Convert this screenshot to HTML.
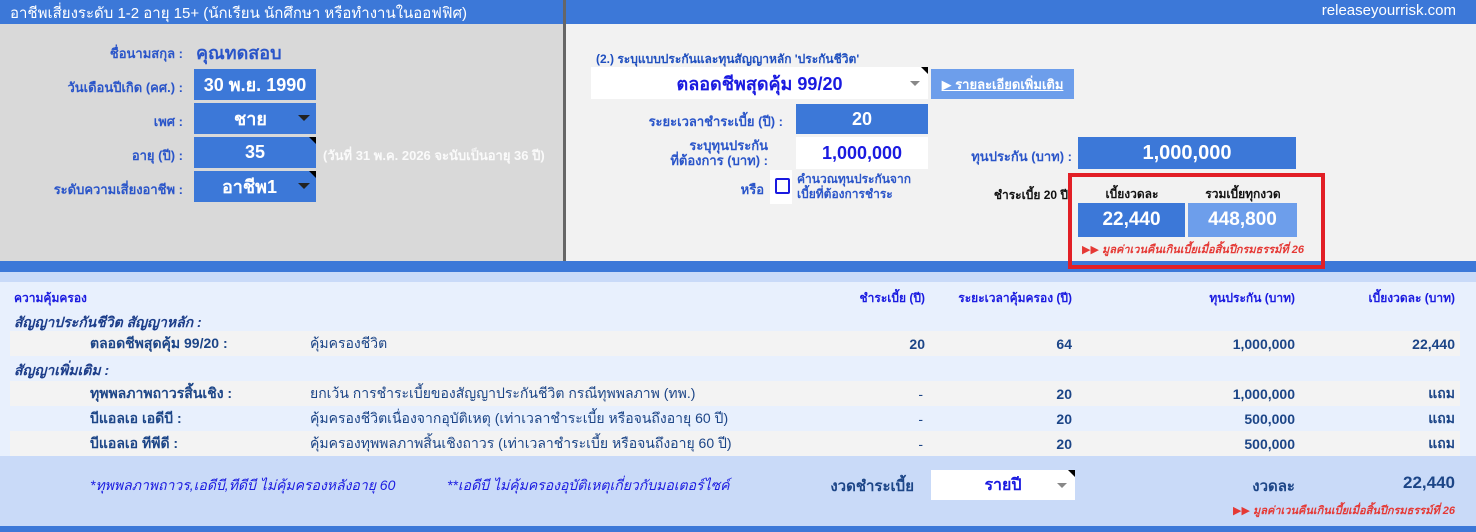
<!DOCTYPE html>
<html><head><meta charset="utf-8"><style>
*{margin:0;padding:0;box-sizing:border-box}
body{width:1476px;height:532px;position:relative;overflow:hidden;font-family:"Liberation Sans","DejaVu Sans",sans-serif;background:#e8f0fd}
.a{position:absolute;white-space:nowrap}
.lbl{color:#2a55c9;font-size:13px;font-weight:bold;text-align:right}
.box{position:absolute;background:#3c78d8;color:#fff;font-weight:bold;font-size:18px;display:flex;align-items:center;justify-content:center}
.wbox{position:absolute;background:#fff;font-weight:bold;display:flex;align-items:center;justify-content:center}
.tri{position:absolute;right:0;top:0;width:0;height:0;border-top:7px solid #000;border-left:7px solid transparent}
.dd{position:absolute;width:0;height:0;border-left:6px solid transparent;border-right:6px solid transparent;border-top:6px solid #222}
.row{position:absolute;left:10px;width:1450px;height:25px;background:#f3f3f3}
.t{position:absolute;font-size:14px;color:#1c4587;white-space:nowrap;top:50%;transform:translateY(-50%)}
.b{font-weight:bold}
</style></head><body>
<div class="a" style="left:0;top:0;width:1476px;height:24px;background:#3c78d8"></div>
<div class="a" style="left:10px;top:1px;color:#fff;font-size:15px">อาชีพเสี่ยงระดับ 1-2 อายุ 15+ (นักเรียน นักศึกษา หรือทำงานในออฟฟิศ)</div>
<div class="a" style="right:20px;top:2px;color:#fff;font-size:15px">releaseyourrisk.com</div>
<div class="a" style="left:0;top:24px;width:563px;height:237px;background:#d9d9d9"></div>
<div class="a" style="left:563px;top:0;width:3px;height:261px;background:#666"></div>
<div class="a" style="left:566px;top:24px;width:910px;height:237px;background:#f2f2f2"></div>

<div class="a lbl" style="right:1293px;top:43px">ชื่อนามสกุล :</div>
<div class="a" style="left:196px;top:38px;font-size:18px;font-weight:bold;color:#2a55c9">คุณทดสอบ</div>
<div class="a lbl" style="right:1293px;top:77px">วันเดือนปีเกิด (คศ.) :</div>
<div class="box" style="left:194px;top:69px;width:122px;height:31px">30 พ.ย. 1990</div>
<div class="a lbl" style="right:1293px;top:111px">เพศ :</div>
<div class="box" style="left:194px;top:103px;width:122px;height:31px;justify-content:flex-start;padding-left:40px">ชาย<div class="dd" style="right:6px;top:12px"></div></div>
<div class="a lbl" style="right:1293px;top:145px">อายุ (ปี) :</div>
<div class="box" style="left:194px;top:137px;width:122px;height:31px">35<div class="tri"></div></div>
<div class="a" style="left:323px;top:145px;color:#fafafa;font-size:13px;font-weight:bold">(วันที่ 31 พ.ค. 2026 จะนับเป็นอายุ 36 ปี)</div>
<div class="a lbl" style="right:1293px;top:179px">ระดับความเสี่ยงอาชีพ :</div>
<div class="box" style="left:194px;top:171px;width:122px;height:31px;justify-content:flex-start;padding-left:28px">อาชีพ1<div class="tri"></div><div class="dd" style="right:6px;top:12px"></div></div>

<div class="a" style="left:596px;top:50px;color:#1f4fbf;font-size:12px;font-weight:bold">(2.) ระบุแบบประกันและทุนสัญญาหลัก 'ประกันชีวิต'</div>
<div class="wbox" style="left:591px;top:67px;width:337px;height:32px;color:#1a1ae0;font-size:18px">ตลอดชีพสุดคุ้ม 99/20<div class="tri"></div><div class="dd" style="right:8px;top:14px;border-width:5px;border-top-color:#888"></div></div>
<div class="a" style="left:931px;top:69px;width:143px;height:30px;background:#6d9eeb;color:#fff;font-size:13px;font-weight:bold;text-decoration:underline;display:flex;align-items:center;justify-content:center">▶ รายละเอียดเพิ่มเติม</div>
<div class="a lbl" style="right:693px;top:111px">ระยะเวลาชำระเบี้ย (ปี) :</div>
<div class="box" style="left:796px;top:104px;width:132px;height:30px">20</div>
<div class="a lbl" style="right:708px;top:138px;line-height:15px">ระบุทุนประกัน<br>ที่ต้องการ (บาท) :</div>
<div class="wbox" style="left:796px;top:137px;width:132px;height:32px;color:#1a1ae0;font-size:18px">1,000,000</div>
<div class="a lbl" style="right:404px;top:146px">ทุนประกัน (บาท) :</div>
<div class="box" style="left:1078px;top:137px;width:218px;height:32px;font-size:20px">1,000,000</div>
<div class="a lbl" style="right:712px;top:179px">หรือ</div>
<div class="a" style="left:770px;top:170px;width:22px;height:34px;background:#fff"></div>
<div class="a" style="left:775px;top:178px;width:15px;height:16px;border:2px solid #1a1ae0;border-radius:2px"></div>
<div class="a" style="left:797px;top:172px;color:#2a55c9;font-size:12px;font-weight:bold;line-height:15px">คำนวณทุนประกันจาก<br>เบี้ยที่ต้องการชำระ</div>
<div class="a" style="right:408px;top:186px;color:#111;font-size:12px;font-weight:bold">ชำระเบี้ย 20 ปี</div>
<div class="a" style="left:1078px;top:185px;width:108px;text-align:center;color:#111;font-size:12px;font-weight:bold">เบี้ยงวดละ</div>
<div class="a" style="left:1188px;top:185px;width:110px;text-align:center;color:#111;font-size:12px;font-weight:bold">รวมเบี้ยทุกงวด</div>
<div class="box" style="left:1078px;top:203px;width:107px;height:34px;font-size:19px">22,440</div>
<div class="box" style="left:1188px;top:203px;width:109px;height:34px;font-size:19px;background:#6d9eeb">448,800</div>
<div class="a" style="left:1082px;top:240px;color:#e53935;font-size:11px;font-weight:bold;font-style:italic">▶▶ มูลค่าเวนคืนเกินเบี้ยเมื่อสิ้นปีกรมธรรม์ที่ 26</div>

<div class="a" style="left:0;top:261px;width:1476px;height:11px;background:#3c78d8"></div>
<div class="a" style="left:0;top:272px;width:1476px;height:10px;background:#c9daf8"></div>
<div class="a" style="left:1068px;top:173px;width:257px;height:96px;border:4px solid #e21f26;z-index:5"></div>

<div class="a" style="left:14px;top:289px;color:#1a1ae0;font-size:12px;font-weight:bold">ความคุ้มครอง</div>
<div class="a" style="right:551px;top:289px;color:#1a1ae0;font-size:12px;font-weight:bold">ชำระเบี้ย (ปี)</div>
<div class="a" style="right:404px;top:289px;color:#1a1ae0;font-size:12px;font-weight:bold">ระยะเวลาคุ้มครอง (ปี)</div>
<div class="a" style="right:181px;top:289px;color:#1a1ae0;font-size:12px;font-weight:bold">ทุนประกัน (บาท)</div>
<div class="a" style="right:21px;top:289px;color:#1a1ae0;font-size:12px;font-weight:bold">เบี้ยงวดละ (บาท)</div>
<div class="a" style="left:14px;top:312px;color:#1c3d8a;font-size:14px;font-weight:bold;font-style:italic">สัญญาประกันชีวิต สัญญาหลัก :</div>

<div class="row" style="top:331px">
<span class="t b" style="left:80px">ตลอดชีพสุดคุ้ม 99/20 :</span>
<span class="t" style="left:300px">คุ้มครองชีวิต</span>
<span class="t b" style="right:535px">20</span>
<span class="t b" style="right:388px">64</span>
<span class="t b" style="right:165px">1,000,000</span>
<span class="t b" style="right:5px">22,440</span>
</div>
<div class="a" style="left:14px;top:360px;color:#1c3d8a;font-size:14px;font-weight:bold;font-style:italic">สัญญาเพิ่มเติม :</div>
<div class="row" style="top:381px">
<span class="t b" style="left:80px">ทุพพลภาพถาวรสิ้นเชิง :</span>
<span class="t" style="left:300px">ยกเว้น การชำระเบี้ยของสัญญาประกันชีวิต กรณีทุพพลภาพ (ทพ.)</span>
<span class="t" style="right:537px">-</span>
<span class="t b" style="right:388px">20</span>
<span class="t b" style="right:165px">1,000,000</span>
<span class="t b" style="right:5px">แถม</span>
</div>
<div class="row" style="top:406px;background:transparent">
<span class="t b" style="left:80px">บีแอลเอ เอดีบี :</span>
<span class="t" style="left:300px">คุ้มครองชีวิตเนื่องจากอุบัติเหตุ (เท่าเวลาชำระเบี้ย หรือจนถึงอายุ 60 ปี)</span>
<span class="t" style="right:537px">-</span>
<span class="t b" style="right:388px">20</span>
<span class="t b" style="right:165px">500,000</span>
<span class="t b" style="right:5px">แถม</span>
</div>
<div class="row" style="top:431px">
<span class="t b" style="left:80px">บีแอลเอ ทีพีดี :</span>
<span class="t" style="left:300px">คุ้มครองทุพพลภาพสิ้นเชิงถาวร (เท่าเวลาชำระเบี้ย หรือจนถึงอายุ 60 ปี)</span>
<span class="t" style="right:537px">-</span>
<span class="t b" style="right:388px">20</span>
<span class="t b" style="right:165px">500,000</span>
<span class="t b" style="right:5px">แถม</span>
</div>

<div class="a" style="left:0;top:456px;width:1476px;height:70px;background:#c9daf8"></div>
<div class="a" style="left:0;top:526px;width:1476px;height:6px;background:#3c78d8"></div>
<div class="a" style="left:90px;top:475px;color:#1a1ae0;font-size:14px;font-style:italic">*ทุพพลภาพถาวร,เอดีบี,ทีดีบี ไม่คุ้มครองหลังอายุ 60</div>
<div class="a" style="left:447px;top:475px;color:#1a1ae0;font-size:14px;font-style:italic">**เอดีบี ไม่คุ้มครองอุบัติเหตุเกี่ยวกับมอเตอร์ไซค์</div>
<div class="a" style="right:562px;top:474px;color:#1c4587;font-size:15px;font-weight:bold">งวดชำระเบี้ย</div>
<div class="wbox" style="left:931px;top:470px;width:144px;height:30px;color:#1a1ae0;font-size:16px">รายปี<div class="tri"></div><div class="dd" style="right:8px;top:13px;border-width:5px;border-top-color:#888"></div></div>
<div class="a" style="right:181px;top:474px;color:#1c4587;font-size:15px;font-weight:bold">งวดละ</div>
<div class="a" style="right:21px;top:473px;color:#1c4587;font-size:17px;font-weight:bold">22,440</div>
<div class="a" style="right:21px;top:501px;color:#e53935;font-size:11px;font-weight:bold;font-style:italic">▶▶ มูลค่าเวนคืนเกินเบี้ยเมื่อสิ้นปีกรมธรรม์ที่ 26</div>
</body></html>
